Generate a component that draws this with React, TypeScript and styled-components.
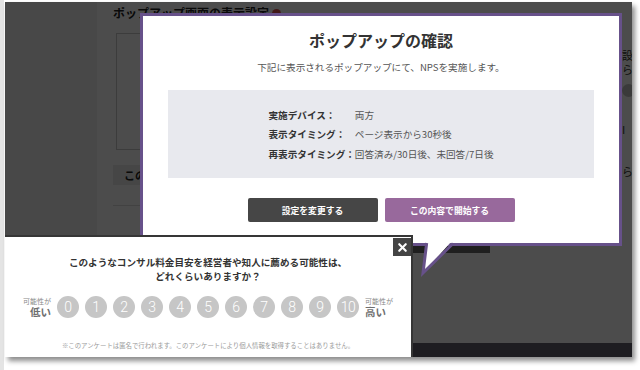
import React from 'react';
import styled, { createGlobalStyle } from 'styled-components';
import { X } from 'lucide-react';

const GlobalStyle = createGlobalStyle`
  html, body {
    margin: 0;
    padding: 0;
    background: #fff;
  }
  body {
    font-family: "Noto Sans CJK JP", "Noto Sans", sans-serif;
  }
`;

const Stage = styled.div`
  width: 640px;
  height: 370px;
  box-sizing: border-box;
  padding: 2px 0 0 5px;
  background: linear-gradient(to right, #e4e4e4 0 4px, #fff 4px);
`;

const Frame = styled.div`
  position: relative;
  width: 627px;
  height: 355px;
  overflow: hidden;
  box-shadow: 3px 4px 5px rgba(0, 0, 0, 0.45);
`;

/* page behind the overlay */
const Page = styled.div`
  display: flex;
  height: 100%;
`;

const Sidebar = styled.div`
  flex: 0 0 92px;
  background: #f0f0f0;
`;

const Main = styled.div`
  flex: 1;
  min-width: 0;
  display: flex;
  flex-direction: column;
  background: #fff;
`;

const Content = styled.div`
  flex: 1;
  display: grid;
  grid-template-columns: 500px 200px;
  column-gap: 9px;
  padding-left: 16px;
`;

const Column = styled.div`
  display: flex;
  flex-direction: column;
`;

const PageHeading = styled.h2`
  margin: 0;
  font-size: 12px;
  line-height: 22px;
  font-weight: 700;
  color: #222;
  display: flex;
  align-items: center;
  gap: 3px;
`;

const Help = styled.span`
  width: 9px;
  height: 9px;
  border-radius: 50%;
  background: #d9534f;
`;

const PreviewBox = styled.div`
  margin: 9px 0 0 3px;
  height: 115px;
  border: 1px solid #c8c8c8;
`;

const Band = styled.div`
  margin-top: 15px;
  height: 20px;
  padding-left: 11px;
  background: #ececec;
  font-size: 11px;
  font-weight: 700;
  line-height: 20px;
  color: #222;
`;

const Rule = styled.div`
  margin-top: 20px;
  height: 1px;
  background: #ddd;
`;

const PageButton = styled.div`
  margin: 19px 0 0 300px;
  width: 77px;
  height: 28px;
  background: #6a6a6a;
`;

const SideText = styled.div<{ $top: number }>`
  margin-top: ${(p) => p.$top}px;
  font-size: 11px;
  line-height: 14px;
  color: #333;
`;

const SideDot = styled.div`
  margin-top: 8px;
  width: 13px;
  height: 13px;
  border-radius: 50%;
  background: #c4c4c4;
`;

const PageFooter = styled.div`
  height: 14px;
  background: #646171;
`;

const Overlay = styled.div`
  position: absolute;
  inset: 0;
  background: rgba(0, 0, 0, 0.7);
`;

/* confirm modal */
const Modal = styled.div`
  position: absolute;
  left: 135px;
  top: 11px;
  width: 482px;
  height: 233px;
  box-sizing: border-box;
  border: 3px solid #67518a;
  background: #fff;
  padding: 13px 25px 0;
  display: flex;
  flex-direction: column;
  align-items: center;
`;

const Title = styled.h1`
  margin: 0;
  font-size: 16px;
  line-height: 22px;
  font-weight: 700;
  color: #333;
`;

const Lead = styled.p`
  margin: 9px 0 0;
  font-size: 9.6px;
  line-height: 14px;
  color: #555;
`;

const InfoBox = styled.div`
  margin-top: 16px;
  align-self: stretch;
  height: 88px;
  background: #e8e9ee;
  display: flex;
  align-items: center;
  justify-content: center;
`;

const InfoTable = styled.div`
  display: grid;
  grid-template-columns: auto auto;
  grid-auto-rows: 19.5px;
  align-items: center;
  font-size: 9.6px;
`;

const InfoLabel = styled.span`
  font-weight: 700;
  color: #333;
`;

const InfoValue = styled.span`
  color: #555;
`;

const Actions = styled.div`
  margin-top: 20px;
  display: flex;
  gap: 7px;
`;

const Button = styled.button<{ $primary?: boolean }>`
  width: 130px;
  height: 24px;
  border: none;
  border-radius: 2px;
  padding: 0;
  background: ${(p) => (p.$primary ? '#98699c' : '#464646')};
  color: #fff;
  font-family: inherit;
  font-size: 8.8px;
  font-weight: 700;
`;

const Tail = styled.svg`
  position: absolute;
  left: 267px;
  top: 222px;
  overflow: visible;
`;

/* NPS survey popup */
const Survey = styled.div`
  position: absolute;
  left: 0;
  bottom: 0;
  width: 408px;
  height: 122px;
  box-sizing: border-box;
  border-top: 2px solid #363636;
  border-right: 2px solid #363636;
  background: #fff;
  display: flex;
  flex-direction: column;
  align-items: center;
  padding-top: 18px;
`;

const Close = styled.button`
  position: absolute;
  top: 1px;
  right: 0;
  width: 18px;
  height: 18px;
  padding: 0;
  border: none;
  background: #444;
  color: #fff;
  display: flex;
  align-items: center;
  justify-content: center;
`;

const Question = styled.p`
  margin: 0;
  font-size: 9.6px;
  line-height: 14px;
  font-weight: 700;
  color: #333;
  text-align: center;
`;

const Scale = styled.div`
  margin-top: 13px;
  display: flex;
  align-items: center;
  gap: 6px;
`;

const ScaleLabel = styled.div<{ $align: 'left' | 'right' }>`
  width: 29px;
  display: flex;
  flex-direction: column;
  align-items: ${(p) => (p.$align === 'right' ? 'flex-end' : 'flex-start')};
  white-space: nowrap;
`;

const ScaleSmall = styled.span`
  font-size: 7px;
  line-height: 10px;
  color: #888;
`;

const ScaleBig = styled.span`
  font-size: 10.5px;
  line-height: 12px;
  font-weight: 700;
  color: #6f6f6f;
`;

const Dots = styled.div`
  display: flex;
  gap: 6px;
`;

const Dot = styled.span`
  width: 22px;
  height: 22px;
  border-radius: 50%;
  background: #c6c6c6;
  color: #fff;
  font-family: Roboto, "Liberation Sans", sans-serif;
  font-weight: 300;
  font-size: 14px;
  line-height: 22px;
  text-align: center;
  letter-spacing: -0.5px;
`;

const Note = styled.p`
  margin: 24px 0 0;
  font-size: 6.4px;
  line-height: 8px;
  color: #9a9a9a;
`;

const rows = [
  ['実施デバイス：', '両方'],
  ['表示タイミング：', 'ページ表示から30秒後'],
  ['再表示タイミング：', '回答済み/30日後、未回答/7日後'],
];

export default function App() {
  return (
    <Stage>
      <GlobalStyle />
      <Frame>
        <Page>
          <Sidebar />
          <Main>
            <Content>
              <Column>
                <PageHeading>
                  ポップアップ画面の表示設定
                  <Help />
                </PageHeading>
                <PreviewBox />
                <Band>この内容で開始する</Band>
                <Rule />
                <PageButton />
              </Column>
              <Column>
                <SideText $top={46}>設定<br />ら</SideText>
                <SideDot />
                <SideText $top={25}>I</SideText>
                <SideText $top={28}>らい</SideText>
              </Column>
            </Content>
            <PageFooter />
          </Main>
        </Page>
        <Overlay />

        <Modal>
          <Title>ポップアップの確認</Title>
          <Lead>下記に表示されるポップアップにて、NPSを実施します。</Lead>
          <InfoBox>
            <InfoTable>
              {rows.map(([label, value]) => (
                <React.Fragment key={label}>
                  <InfoLabel>{label}</InfoLabel>
                  <InfoValue>{value}</InfoValue>
                </React.Fragment>
              ))}
            </InfoTable>
          </InfoBox>
          <Actions>
            <Button>設定を変更する</Button>
            <Button $primary>この内容で開始する</Button>
          </Actions>
          <Tail width="50" height="45" viewBox="0 0 50 45">
            <polygon points="17,4 13,35 41,4" fill="#fff" />
            <polyline
              points="16.5,6.5 13,35 42,6.5"
              fill="none"
              stroke="#67518a"
              strokeWidth="3"
              strokeLinecap="square"
            />
          </Tail>
        </Modal>

        <Survey>
          <Close aria-label="閉じる">
            <X size={13} strokeWidth={4} />
          </Close>
          <Question>
            このようなコンサル料金目安を経営者や知人に薦める可能性は、
            <br />
            どれくらいありますか？
          </Question>
          <Scale>
            <ScaleLabel $align="right">
              <ScaleSmall>可能性が</ScaleSmall>
              <ScaleBig>低い</ScaleBig>
            </ScaleLabel>
            <Dots>
              {Array.from({ length: 11 }, (_, i) => (
                <Dot key={i}>{i}</Dot>
              ))}
            </Dots>
            <ScaleLabel $align="left">
              <ScaleSmall>可能性が</ScaleSmall>
              <ScaleBig>高い</ScaleBig>
            </ScaleLabel>
          </Scale>
          <Note>※このアンケートは匿名で行われます。このアンケートにより個人情報を取得することはありません。</Note>
        </Survey>
      </Frame>
    </Stage>
  );
}
